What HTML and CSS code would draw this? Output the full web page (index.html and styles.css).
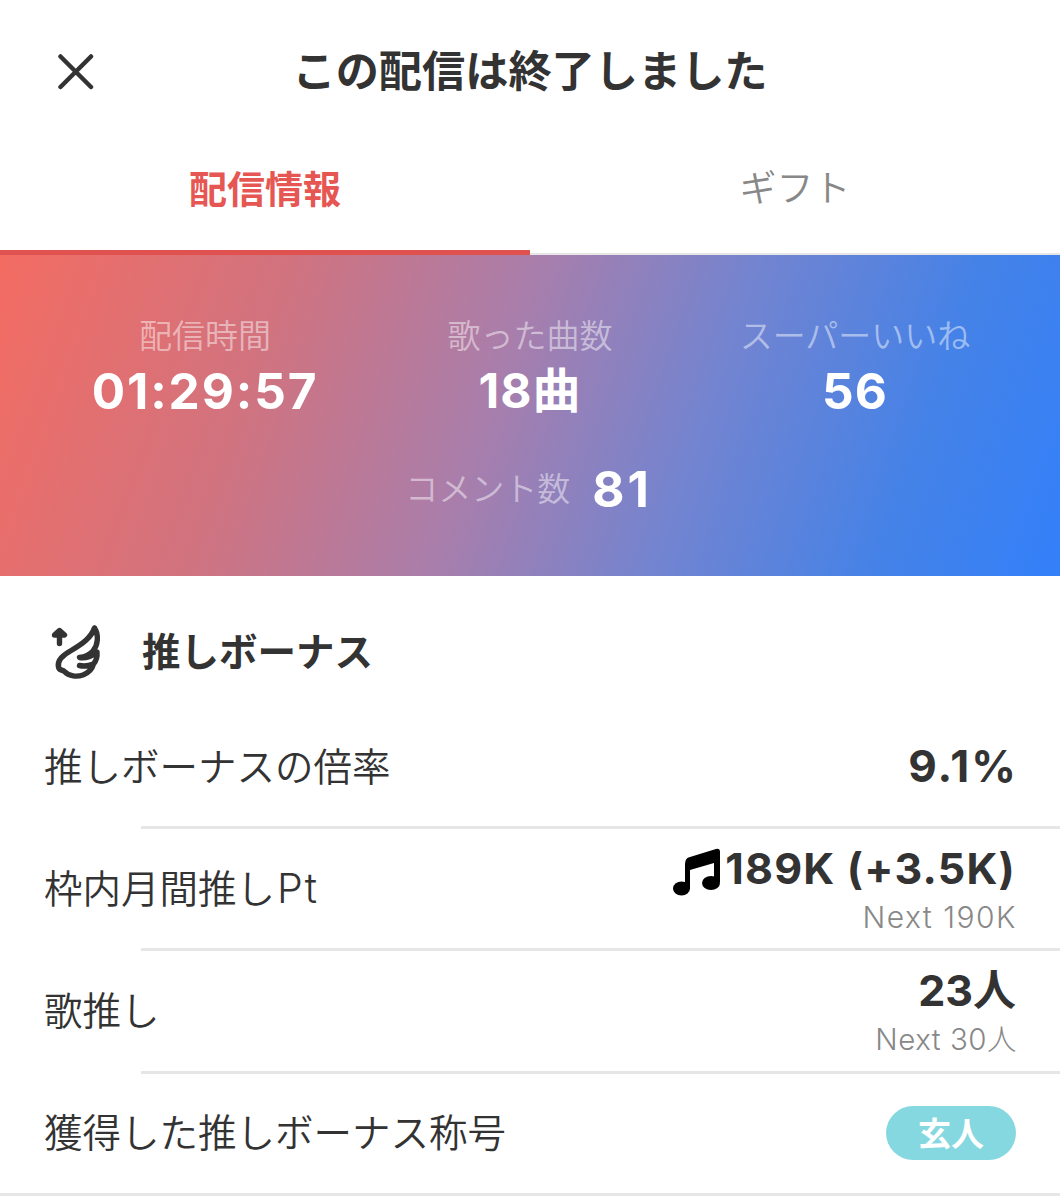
FILE: index.html
```html
<!DOCTYPE html>
<html lang="ja">
<head>
<meta charset="utf-8">
<title>配信情報</title>
<link rel="stylesheet" href="styles.css">
</head>
<body>
<header class="header">
  <svg class="close" viewBox="0 0 36 36" aria-label="閉じる"><path d="M2.5 2.5 L33 33 M33 2.5 L2.5 33"/></svg>
  <h1 class="title">この配信は終了しました</h1>
</header>
<nav class="tabs">
  <div class="tab tab-active">配信情報</div>
  <div class="tab">ギフト</div>
</nav>
<section class="hero">
  <div class="stats">
    <div class="stat"><span class="label">配信時間</span><span class="num num-time">01:29:57</span></div>
    <div class="stat"><span class="label">歌った曲数</span><span class="num num-songs">18曲</span></div>
    <div class="stat"><span class="label">スーパーいいね</span><span class="num">56</span></div>
  </div>
  <div class="comments"><span class="label">コメント数</span><span class="num num-comments">81</span></div>
</section>
<section class="bonus">
  <div class="section-head">
    <svg class="wing" viewBox="0 0 75 80"><path d="M19.500 33.500V23M14.500 25L19.500 20.500L24.500 25Z"/><path d="M54.500 18C51 28 42 34 32 40C23 45 17 50 18.500 57C19 60.500 22 59.500 24.500 61.500C29 66.500 37 67 43 65C48 63 52 59.500 53.500 54Q46 57 39.500 55.500M54.500 18C59 25 58 35 53 41C49 45.500 44 47 39.500 47.500C46 48.500 53 46 57 42C57.500 47 56 51 53.500 54"/></svg>
    <h2 class="section-title">推しボーナス</h2>
  </div>
  <div class="row row-first"><span class="name">推しボーナスの倍率</span><span class="value value-rate">9.1%</span></div>
  <div class="row"><span class="name">枠内月間推し<span class="latin">Pt</span></span>
    <div class="values">
      <div class="points">
        <svg class="note" viewBox="0 0 48 48"><path d="M12 15Q12 9 17 8L43 0Q47 -1 47 3V33H41V14L17 21V39H12Z"/><ellipse cx="8.500" cy="39.500" rx="8.500" ry="7"/><ellipse cx="38" cy="34" rx="9" ry="7"/></svg>
        <span class="value value-points">189K (+3.5K)</span>
      </div>
      <span class="next">Next 190K</span>
    </div>
  </div>
  <div class="row"><span class="name">歌推し</span>
    <div class="values"><span class="value">23人</span><span class="next next-people">Next 30人</span></div>
  </div>
  <div class="row row-last"><span class="name">獲得した推しボーナス称号</span><span class="badge">玄人</span></div>
</section>
</body>
</html>
```
FILE: styles.css
```css
* { box-sizing: border-box; }
body {
  margin: 0;
  width: 1060px;
  height: 1200px;
  overflow: hidden;
  background: #fff;
  color: #333;
  font-family: Inter, "Noto Sans CJK JP", sans-serif;
  font-feature-settings: "calt" 0;
}
h1, h2 { margin: 0; }
.header {
  display: grid;
  grid-template-columns: 152px 1fr 152px;
  align-items: center;
  justify-items: center;
  height: 144px;
}
.close { width: 36px; height: 36px; fill: none; stroke: #333; stroke-width: 4.5; stroke-linecap: round; }
.title { font-size: 43.2px; line-height: 60px; padding-bottom: 3px; font-weight: 700; white-space: nowrap; }
.tabs { display: flex; height: 111px; }
.tab {
  flex: 1;
  text-align: center;
  font-size: 37px;
  line-height: 90px;
  color: #888;
  font-weight: 350;
  border-bottom: 2px solid #e6e6e6;
}
.tab-active { font-size: 38px; font-weight: 700; color: #e65753; border-bottom: 5px solid #e0524f; }
.hero {
  height: 321px;
  padding-top: 59px;
  background: linear-gradient(109deg, #f36c62 0%, #d1737f 25%, #a97eab 46%, #7384d0 65%, #4582e7 84%, #3380fa 100%);
}
.stats { display: grid; grid-template-columns: 325px 325px 325px; justify-content: center; }
.stat { display: flex; flex-direction: column; align-items: center; }
.label { font-size: 33px; line-height: 44px; font-weight: 350; color: rgba(255, 255, 255, .48); white-space: nowrap; }
.num { font-size: 49.5px; line-height: 66px; font-weight: 700; color: #fff; white-space: nowrap; letter-spacing: 1px; }
.num-time { letter-spacing: 1.9px; }
.num-songs { font-size: 48px; }
.num-comments { letter-spacing: 3px; }
.comments { display: flex; justify-content: center; align-items: center; gap: 22px; margin: 32px 3px 0 0; }
.section-head { display: flex; align-items: center; height: 150px; padding-left: 40px; }
.wing { width: 75px; height: 80px; margin-right: 27px; margin-bottom: 2px; fill: none; stroke: #333; stroke-width: 5.4; stroke-linecap: round; stroke-linejoin: round; }
.section-title { font-size: 38.5px; line-height: 50px; padding-top: 2px; font-weight: 700; }
.row {
  display: flex;
  justify-content: space-between;
  align-items: center;
  height: 122.33px;
  padding: 0 44px 3px;
  background: linear-gradient(#e6e6e6, #e6e6e6) 141px 100% / 919px 3px no-repeat;
}
.row-first { height: 103px; padding-bottom: 21px; }
.row-last { background-position: 0 100%; background-size: 100% 3px; }
.name { font-size: 38.5px; line-height: 50px; font-weight: 350; white-space: nowrap; }
.latin { font-size: 41px; letter-spacing: 2px; line-height: 1; margin-left: 2px; }
.value { font-size: 43px; line-height: 50px; font-weight: 700; white-space: nowrap; }
.value-rate { font-size: 44px; letter-spacing: 2px; margin-right: -2px; padding-bottom: 3px; }
.value-points { letter-spacing: 1.2px; }
.values { display: flex; flex-direction: column; align-items: flex-end; padding-top: 3px; }
.points { display: flex; align-items: center; gap: 4px; }
.note { width: 48px; height: 48px; margin: 5px 0 -5px; overflow: visible; fill: #000; }
.next { font-size: 30px; line-height: 40px; margin-top: 4px; font-weight: 300; color: #888; white-space: nowrap; letter-spacing: 1.5px; margin-right: -1px; }
.next-people { font-size: 29.5px; letter-spacing: .5px; }
.badge {
  width: 130px;
  height: 54px;
  border-radius: 27px;
  background: #86d8e0;
  color: #fff;
  font-size: 33px;
  line-height: 56px;
  font-weight: 700;
  text-align: center;
}
```
